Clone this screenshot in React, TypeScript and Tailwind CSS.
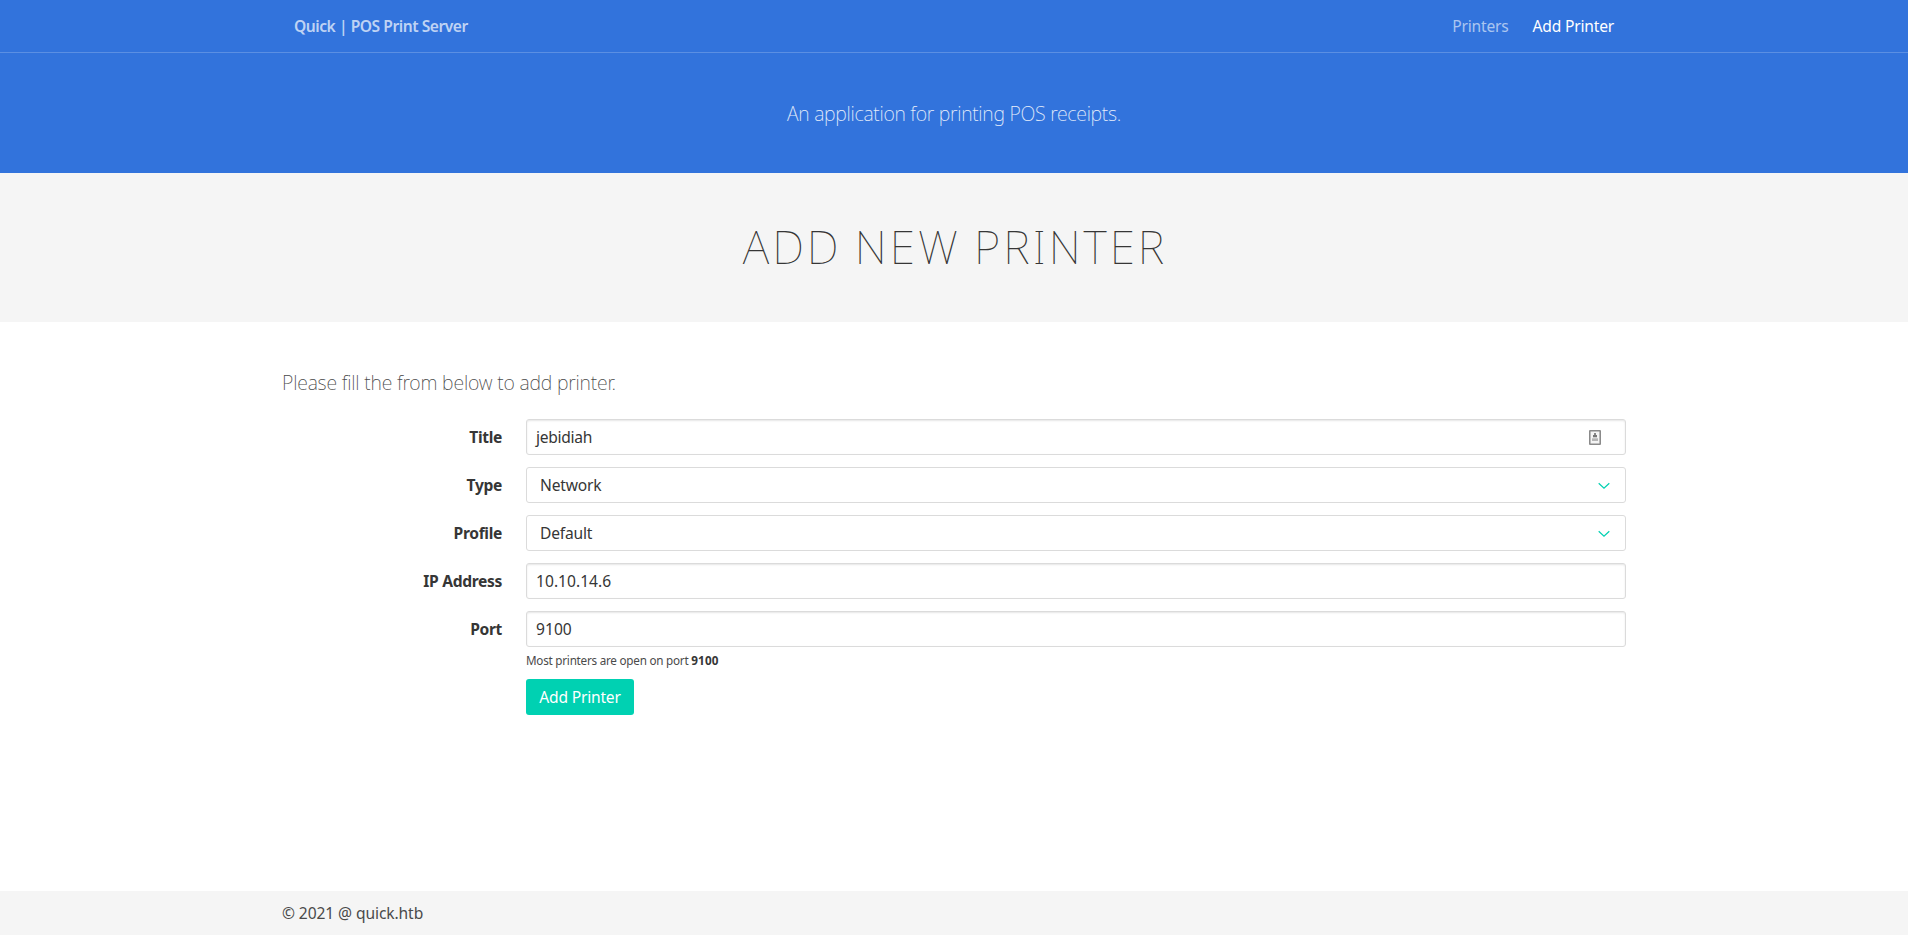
import type { ReactNode } from "react";

const control = "flex h-9 w-full items-center rounded-[3px] border border-[#dbdbdb] bg-white";
const inset = "shadow-[inset_0_1px_2px_rgba(10,10,10,0.1)]";

function Row({ label, children }: { label: string; children: ReactNode }) {
  return (
    <div className="flex items-start">
      <label className="mr-6 w-[220px] pt-1.5 text-right font-bold tracking-[-0.33px] text-[#363636]">
        {label}
      </label>
      <div className="flex-1">{children}</div>
    </div>
  );
}

function TextInput({ value, numeric, children }: { value: string; numeric?: boolean; children?: ReactNode }) {
  return (
    <div className={`${control} ${inset} justify-between pl-[9px] pr-6 text-[#363636]`}>
      <span className={numeric ? "tracking-[0.02px]" : "tracking-[-0.3px]"}>{value}</span>
      {children}
    </div>
  );
}

function Select({ value }: { value: string }) {
  return (
    <div className={`${control} justify-between pl-[13px] pr-[15px] text-[#363636]`}>
      <span>{value}</span>
      <svg className="mt-px" width="12" height="8" viewBox="0 0 12 8" fill="none" stroke="#00d1b2" strokeWidth="1.2">
        <path d="M0.7 1.2 L6 6.2 L11.3 1.2" />
      </svg>
    </div>
  );
}

function ContactIcon() {
  return (
    <svg width="12" height="15" viewBox="0 0 12 15">
      <rect x="0.75" y="0.75" width="10.5" height="13.5" rx="0.7" fill="#f4f4f4" stroke="#8a8a8a" strokeWidth="1.6" />
      <rect x="5" y="3" width="2" height="2.5" fill="#888" />
      <rect x="4" y="5" width="4" height="2.3" fill="#777" />
      <rect x="3" y="8.3" width="6" height="2.7" fill="#b5b5b5" />
    </svg>
  );
}

export default function App() {
  return (
    <div className="flex h-[935px] flex-col bg-white font-['Noto_Sans',sans-serif] text-[15.6px] leading-6 tracking-[-0.2px] text-[#4a4a4a]">
      <header className="h-[173px] bg-[#3273dc]">
        <nav className="h-[53px] border-b border-white/20">
          <div className="mx-auto flex h-[52px] w-[1344px] items-center justify-between px-3">
            <span className="font-semibold tracking-[-0.46px] text-white/70">Quick | POS Print Server</span>
            <div className="flex gap-6">
              <a className="text-white/60">Printers</a>
              <a className="text-white">Add Printer</a>
            </div>
          </div>
        </nav>
        <p className="flex h-[120px] items-center justify-center pt-px text-[19.5px] font-extralight tracking-[-0.27px] text-white/90">
          An application for printing POS receipts.
        </p>
      </header>
      <section className="flex h-[149px] items-center justify-center bg-[#f5f5f5] pb-0.5 pl-0.5">
        <h1 className="text-[45.75px] leading-none font-thin tracking-[3px] [word-spacing:-1.5px] text-[#363636]">
          ADD NEW PRINTER
        </h1>
      </section>
      <main className="mx-auto w-[1344px] flex-1 pt-[46px]">
        <p className="mb-[21px] text-[19.5px] leading-[30px] font-extralight tracking-[-0.18px]">
          Please fill the from below to add printer.
        </p>
        <form className="flex flex-col gap-3">
          <Row label="Title">
            <TextInput value="jebidiah">
              <ContactIcon />
            </TextInput>
          </Row>
          <Row label="Type">
            <Select value="Network" />
          </Row>
          <Row label="Profile">
            <Select value="Default" />
          </Row>
          <Row label="IP Address">
            <TextInput value="10.10.14.6" numeric />
          </Row>
          <Row label="Port">
            <TextInput value="9100" numeric />
            <p className="mt-1 text-[11.7px] leading-[18px] tracking-[-0.24px]">
              Most printers are open on port{" "}
              <strong className="font-bold tracking-[0.2px] text-[#363636]">9100</strong>
            </p>
            <button type="button" className="mt-[10px] block h-9 w-[108px] rounded-[3px] bg-[#00d1b2] text-white tracking-[-0.2px]">
              Add Printer
            </button>
          </Row>
        </form>
      </main>
      <footer className="h-11 bg-[#f5f5f5]">
        <p className="mx-auto w-[1344px] pt-[10px] tracking-[-0.1px]">© 2021 @ quick.htb</p>
      </footer>
    </div>
  );
}
